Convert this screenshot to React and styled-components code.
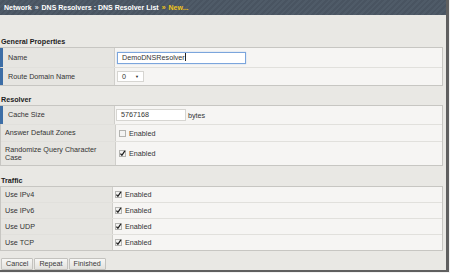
import React from 'react'
import styled, { createGlobalStyle } from 'styled-components'

const GlobalStyle = createGlobalStyle`
  html, body {
    margin:0;
    padding:0;
    background:#f2f2f2;
  }
  body {
    font-family:"Liberation Sans", Arial, sans-serif;
  }
`

const Frame = styled.div`
  width:446px;
  height:270px;
  background:#e9e8e4;
  border-right:3px solid #5f5f5f;
  border-bottom:2px solid #5f5f5f;
  display:flex;
  flex-direction:column;
  overflow:hidden;
`

const Header = styled.div`
  height:15px;
  line-height:15px;
  padding-left:4px;
  background:repeating-linear-gradient(135deg,#4f5b68 0 2px,#495461 2px 4px);
  color:#fff;
  font-size:7px;
  font-weight:bold;
  white-space:nowrap;
`

const Sep = styled.span`
  margin:0 3px;
  color:${p => (p.$current ? '#f0c419' : '#dfe3e8')};
`

const Current = styled.span`
  color:#f0c419;
`

const Heading = styled.div`
  margin-top:${p => p.$top}px;
  height:10px;
  line-height:10px;
  padding-left:1px;
  font-size:7.2px;
  font-weight:bold;
  color:#1c1c1c;
`

const Table = styled.div`
  width:443px;
  box-sizing:border-box;
  border:1px solid #c7c6c2;
  background:#f6f5f3;
`

const Row = styled.div`
  display:flex;
  height:${p => p.$h}px;
  & + & {
    border-top:1px solid #e1e0dc;
  }
`

const Label = styled.div`
  width:${p => p.$w}px;
  flex:none;
  box-sizing:border-box;
  background:#e6e5e1;
  border-right:1px solid #d0cfcb;
  border-left:${p => (p.$req ? '3px solid #3d6ea6' : 'none')};
  margin-left:${p => (p.$req ? '-1px' : '0')};
  padding:0 12px 0 ${p => (p.$req ? 5 : 4)}px;
  display:flex;
  align-items:center;
  font-size:7.2px;
  line-height:8px;
  color:#333;
`

const Value = styled.div`
  flex:1;
  display:flex;
  align-items:center;
  gap:${p => p.$gap || 3}px;
  padding-left:${p => p.$pad || 2}px;
  font-size:7.2px;
  color:#333;
`

const Field = styled.div`
  width:${p => p.$w}px;
  height:12px;
  box-sizing:border-box;
  border:1px solid ${p => (p.$focus ? '#7ba5dc' : '#d6d5d1')};
  box-shadow:${p => (p.$focus ? '0 0 1px #9fc1ea' : 'none')};
  background:#fff;
  padding-left:4px;
  font-size:7.2px;
  line-height:10px;
  color:#333;
  white-space:nowrap;
  &::after {
    content:'';
    display:${p => (p.$focus ? 'inline-block' : 'none')};
    width:1px;
    height:8px;
    margin-left:0;
    vertical-align:-1px;
    background:#222;
  }
`

const Select = styled.div`
  width:27px;
  height:11px;
  box-sizing:border-box;
  border:1px solid #d6d5d1;
  background:#fff;
  display:flex;
  align-items:center;
  justify-content:space-between;
  padding:0 4px 0 4px;
  font-size:7.2px;
  color:#333;
`

const Arrow = styled.span`
  font-size:4px;
  color:#222;
`

const Buttons = styled.div`
  display:flex;
  gap:1px;
  margin-top:7px;
  padding-left:1px;
`

const Button = styled.button`
  height:12px;
  padding:0 4px;
  font-family:"Liberation Sans", Arial, sans-serif;
  font-size:7.2px;
  line-height:10px;
  color:#3a3a3a;
  background:linear-gradient(#f7f7f5,#e2e1dd);
  border:1px solid #c3c2be;
  border-radius:1px;
`

const Check = ({ checked }) => (
  <svg width="7" height="7" viewBox="0 0 7 7" style={{ flex: 'none' }}>
    <rect x="0.5" y="0.5" width="6" height="6" fill="#f3f3f2" stroke="#b3b3b0" />
    {checked && (
      <path d="M1.4 3.6 L2.9 5.3 L5.9 0.8" fill="none" stroke="#1e1e1e" strokeWidth="1.3" />
    )}
  </svg>
)

const Toggle = ({ checked }) => (
  <>
    <Check checked={checked} />
    <span>Enabled</span>
  </>
)

const traffic = ['Use IPv4', 'Use IPv6', 'Use UDP', 'Use TCP']

const App = () => {
  return (
    <Frame>
      <GlobalStyle />
      <Header>
        Network<Sep>»</Sep>DNS Resolvers : DNS Resolver List<Sep $current>»</Sep>
        <Current>New...</Current>
      </Header>

      <Heading $top={22}>General Properties</Heading>
      <Table>
        <Row $h={19}>
          <Label $w={115} $req>Name</Label>
          <Value>
            <Field $w={129} $focus>DemoDNSResolver</Field>
          </Value>
        </Row>
        <Row $h={17}>
          <Label $w={115} $req>Route Domain Name</Label>
          <Value>
            <Select>
              <span>0</span>
              <Arrow>▼</Arrow>
            </Select>
          </Value>
        </Row>
      </Table>

      <Heading $top={9}>Resolver</Heading>
      <Table>
        <Row $h={18}>
          <Label $w={115} $req>Cache Size</Label>
          <Value $gap={2} $pad={1}>
            <Field $w={70}>5767168</Field>
            <span>bytes</span>
          </Value>
        </Row>
        <Row $h={16}>
          <Label $w={115}>Answer Default Zones</Label>
          <Value $pad={3}>
            <Toggle />
          </Value>
        </Row>
        <Row $h={23}>
          <Label $w={115}>Randomize Query Character Case</Label>
          <Value $pad={3}>
            <Toggle checked />
          </Value>
        </Row>
      </Table>

      <Heading $top={10}>Traffic</Heading>
      <Table>
        {traffic.map(t => (
          <Row $h={15} key={t}>
            <Label $w={112}>{t}</Label>
            <Value>
              <Toggle checked />
            </Value>
          </Row>
        ))}
      </Table>

      <Buttons>
        <Button>Cancel</Button>
        <Button>Repeat</Button>
        <Button>Finished</Button>
      </Buttons>
    </Frame>
  )
}

export default App
